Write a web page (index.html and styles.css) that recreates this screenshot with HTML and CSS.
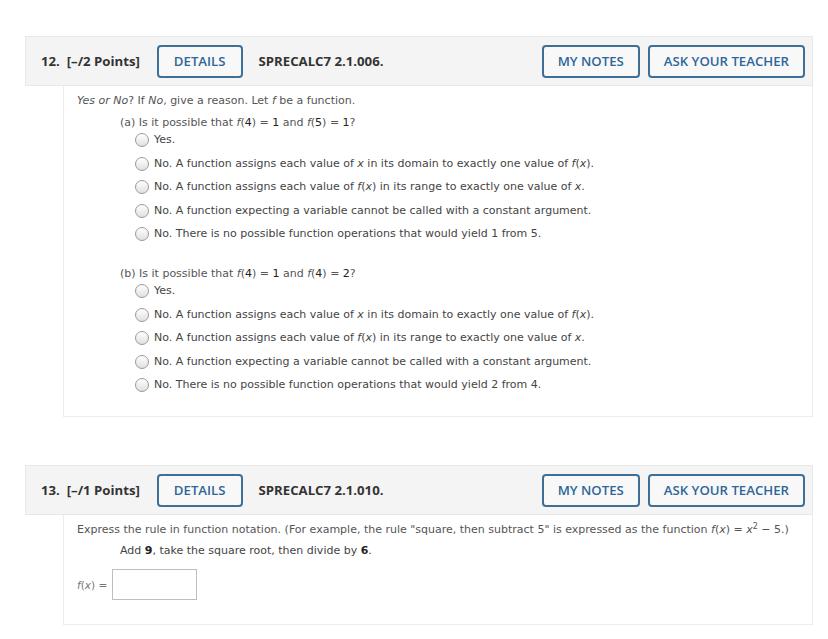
FILE: index.html
```html
<!DOCTYPE html>
<html>
<head>
<meta charset="utf-8">
<link rel="stylesheet" href="styles.css">
</head>
<body>
<div class="page">
  <section class="q q12">
    <header class="qhead">
      <span class="qnum">12.&nbsp; [–/2 Points]</span>
      <button class="btn btn-details">DETAILS</button>
      <span class="qcode">SPRECALC7 2.1.006.</span>
      <span class="spacer"></span>
      <button class="btn">MY NOTES</button>
      <button class="btn">ASK YOUR TEACHER</button>
    </header>
    <div class="qbody">
      <p class="intro"><i>Yes or No</i>? If <i>No</i>, give a reason. Let <i>f</i> be a function.</p>
      <div class="part">
        <p class="prompt">(a) Is it possible that <i>f</i>(<span class="n">4</span>) = <span class="n">1</span> and <i>f</i>(<span class="n">5</span>) = <span class="n">1</span>?</p>
        <ul class="opts">
          <li><span class="radio"></span><span class="lbl">Yes.</span></li>
          <li><span class="radio"></span><span class="lbl">No. A function assigns each value of <i>x</i> in its domain to exactly one value of <i>f</i>(<i>x</i>).</span></li>
          <li><span class="radio"></span><span class="lbl">No. A function assigns each value of <i>f</i>(<i>x</i>) in its range to exactly one value of <i>x</i>.</span></li>
          <li><span class="radio"></span><span class="lbl">No. A function expecting a variable cannot be called with a constant argument.</span></li>
          <li><span class="radio"></span><span class="lbl">No. There is no possible function operations that would yield 1 from 5.</span></li>
        </ul>
      </div>
      <div class="part part-b">
        <p class="prompt">(b) Is it possible that <i>f</i>(<span class="n">4</span>) = <span class="n">1</span> and <i>f</i>(<span class="n">4</span>) = <span class="n">2</span>?</p>
        <ul class="opts">
          <li><span class="radio"></span><span class="lbl">Yes.</span></li>
          <li><span class="radio"></span><span class="lbl">No. A function assigns each value of <i>x</i> in its domain to exactly one value of <i>f</i>(<i>x</i>).</span></li>
          <li><span class="radio"></span><span class="lbl">No. A function assigns each value of <i>f</i>(<i>x</i>) in its range to exactly one value of <i>x</i>.</span></li>
          <li><span class="radio"></span><span class="lbl">No. A function expecting a variable cannot be called with a constant argument.</span></li>
          <li><span class="radio"></span><span class="lbl">No. There is no possible function operations that would yield 2 from 4.</span></li>
        </ul>
      </div>
    </div>
  </section>

  <section class="q q13">
    <header class="qhead">
      <span class="qnum">13.&nbsp; [–/1 Points]</span>
      <button class="btn btn-details">DETAILS</button>
      <span class="qcode">SPRECALC7 2.1.010.</span>
      <span class="spacer"></span>
      <button class="btn">MY NOTES</button>
      <button class="btn">ASK YOUR TEACHER</button>
    </header>
    <div class="qbody body13">
      <p class="intro">Express the rule in function notation. (For example, the rule "square, then subtract 5" is expressed as the function <i>f</i>(<i>x</i>) = <i>x</i><sup>2</sup> − 5.)</p>
      <p class="rule">Add <b>9</b>, take the square root, then divide by <b>6</b>.</p>
      <div class="answer">
        <span class="flabel"><i>f</i>(<i>x</i>) =</span>
        <span class="field"></span>
      </div>
    </div>
  </section>
</div>
</body>
</html>
```

FILE: styles.css
```css
* { box-sizing: border-box; }
html, body { margin: 0; padding: 0; background: #fff; }
.page {
  padding: 36px 15px 0 25px;
  width: 828px;
}
.q { display: flex; flex-direction: column; }
.q13 { margin-top: 48px; }
.qhead {
  display: flex;
  align-items: center;
  height: 50px;
  padding: 0 7px 0 15px;
  background: #f4f4f4;
  border: 1px solid #e8e8e8;
  font-family: "Open Sans", "Liberation Sans", sans-serif;
  font-size: 13.2px;
  color: #333;
}
.qnum { font-weight: 700; margin-right: 17px; }
.qcode { font-weight: 700; margin-left: 16px; }
.spacer { flex: 1; }
.btn {
  height: 33px;
  padding: 0 14px;
  margin-left: 8px;
  background: #f8f8f8;
  border: 2px solid #3d6f99;
  border-radius: 4px;
  color: #2e669a;
  font-family: "Open Sans", "Liberation Sans", sans-serif;
  font-weight: 600;
  font-size: 13.2px;
}
.btn-details { margin-left: 0; padding: 0 15px; }
.qbody {
  margin-left: 38px;
  border: 1px solid #ececec;
  border-top: none;
  padding: 7px 13px 23px;
  font-family: "DejaVu Sans", Verdana, sans-serif;
  font-size: 11px;
  line-height: 16px;
  color: #555;
}
p { margin: 0; }
.intro { color: #555; }
.part { margin-left: 43px; margin-top: 6px; }
.part-b { margin-top: 24px; }
.prompt { color: #555; }
.n { color: #222; }
.opts { list-style: none; margin: 1px 0 0; padding: 0 0 0 15px; }
.opts li {
  display: flex;
  align-items: center;
  height: 16px;
  color: #444;
}
.opts li + li { margin-top: 7.5px; }
.radio {
  width: 14px;
  height: 14px;
  border-radius: 50%;
  border: 1px solid #9a9a9a;
  background: linear-gradient(#ffffff, #e0e0e0);
  margin-right: 5px;
  flex: none;
}
.lbl { white-space: nowrap; }
.body13 { padding: 7px 13px 24px; }
.body13 .intro { color: #555; }
sup { font-size: 8px; line-height: 0; vertical-align: 4px; }
.rule { margin: 5px 0 0 43px; color: #444; }
.rule b { color: #222; }
.answer {
  display: flex;
  align-items: center;
  margin-top: 10px;
  gap: 5px;
}
.flabel { color: #777; font-size: 10.5px; }
.field {
  width: 85px;
  height: 31px;
  border: 1px solid #bdbdbd;
  background: #fff;
}
```
